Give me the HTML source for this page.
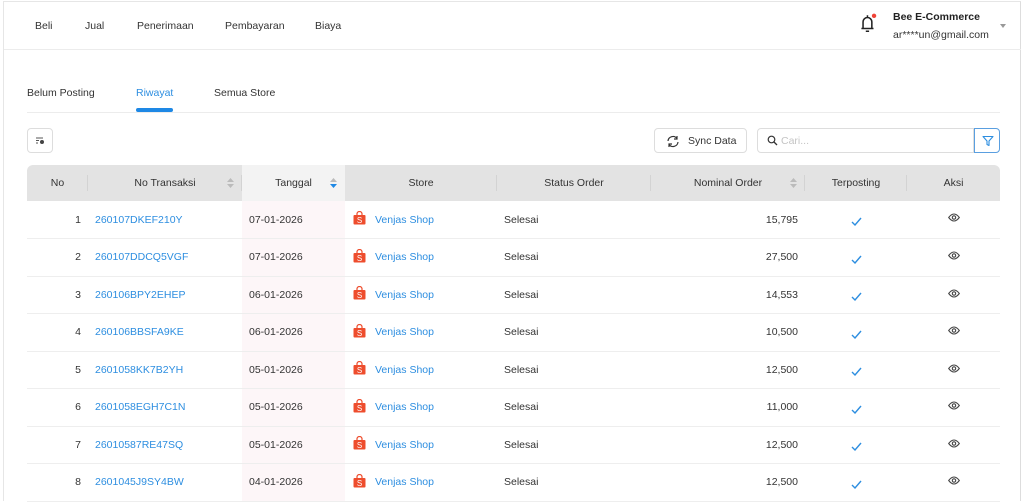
<!DOCTYPE html><html><head><meta charset="utf-8"><style>
*{box-sizing:border-box;margin:0;padding:0}
body{width:1024px;height:496px;overflow:hidden;background:#fff;font-family:"Liberation Sans",sans-serif;font-size:10.5px;color:#333;position:relative}
.frame{position:absolute;left:3px;top:1px;width:1018px;height:500px;border-left:1px solid #e6e6e6;border-right:1px solid #ddd;border-top:1px solid #e6e6e6}
.hdr{position:absolute;left:4px;top:2px;right:3px;height:48px;border-bottom:1px solid #ececec}
.nav{position:absolute;top:20px;font-size:10.5px;color:#333}
.abs{position:absolute}
table{position:absolute;left:27px;top:165px;width:973px;border-collapse:collapse;table-layout:fixed}
th{height:36px;background:#e3e3e3;font-weight:normal;color:#333;font-size:10.5px;position:relative}
th.sel{background:#f3f3f3}
th .sep{position:absolute;right:0;top:10px;height:16px;border-right:1px solid #d3d3d3}
td{height:37.5px;border-bottom:1px solid #eee;font-size:10.5px}
td.t{background:#fdf6f8;padding-left:7px}
.lnk{color:#2d8ee0}
.sort{position:absolute;right:8px;top:12px;width:7px}
</style></head><body>
<div class="frame"></div>
<div class="hdr"></div>
<div class="nav" style="left:35px">Beli</div>
<div class="nav" style="left:85px">Jual</div>
<div class="nav" style="left:137px">Penerimaan</div>
<div class="nav" style="left:225px">Pembayaran</div>
<div class="nav" style="left:315px">Biaya</div>
<svg class="abs" style="left:857px;top:12px" width="22" height="22" viewBox="0 0 20 20"><path d="M4 15h11M5.5 15V9a4 4 0 0 1 8 0v6M8 17.5h3M9.5 3v2" stroke="#222" stroke-width="1.4" fill="none"/><circle cx="15.5" cy="3.5" r="2" fill="#f04438"/></svg>
<div class="abs" style="left:893px;top:11px;font-weight:bold;font-size:10.5px;color:#222">Bee E-Commerce</div>
<div class="abs" style="left:893px;top:29px;font-size:10.5px;color:#333">ar****un@gmail.com</div>
<div class="abs" style="left:1000px;top:24px;width:0;height:0;border-left:3px solid transparent;border-right:3px solid transparent;border-top:4px solid #999"></div>

<div class="abs" style="left:27px;top:87px;color:#333">Belum Posting</div>
<div class="abs" style="left:136px;top:87px;color:#2d8ee0">Riwayat</div>
<div class="abs" style="left:136px;top:108px;width:37px;height:4px;border-radius:2px;background:#1e88e5"></div>
<div class="abs" style="left:214px;top:87px;color:#333">Semua Store</div>
<div class="abs" style="left:27px;top:112px;width:973px;border-top:1px solid #ececec"></div>

<div class="abs" style="left:27px;top:128px;width:26px;height:25px;border:1px solid #ddd;border-radius:4px"><svg width="24" height="23" viewBox="0 0 24 23"><path d="M8 9h7M8 11.5h3M8 14h2" stroke="#555" stroke-width="1"/><circle cx="14" cy="13" r="2" fill="#444"/></svg></div>
<div class="abs" style="left:654px;top:128px;width:93px;height:25px;border:1px solid #ddd;border-radius:4px"><svg class="abs" style="left:11px;top:6px" width="14" height="13" viewBox="0 0 14 13"><path d="M2 6a5 5 0 0 1 9-2.5M12 7a5 5 0 0 1-9 2.5M11 1v3h-3M3 12V9h3" stroke="#333" stroke-width="1.2" fill="none"/></svg><span class="abs" style="left:33px;top:6px;color:#333">Sync Data</span></div>
<div class="abs" style="left:757px;top:128px;width:217px;height:25px;border:1px solid #ddd;border-radius:4px 0 0 4px"><svg class="abs" style="left:9px;top:6px" width="11" height="11" viewBox="0 0 11 11"><circle cx="4.5" cy="4.5" r="3.3" stroke="#333" stroke-width="1.2" fill="none"/><path d="M7 7l3 3" stroke="#333" stroke-width="1.3"/></svg><span class="abs" style="left:23px;top:6px;color:#c4c4c4">Cari...</span></div>
<div class="abs" style="left:974px;top:128px;width:26px;height:25px;border:1px solid #5a9fe0;border-radius:0 4px 4px 0"><svg class="abs" style="left:7px;top:6px" width="12" height="12" viewBox="0 0 12 12"><path d="M1 1.5h10L7 6v4.5L5 9.5V6z" stroke="#2d8ee0" stroke-width="1.1" fill="none" stroke-linejoin="round"/></svg></div>

<table>
<colgroup><col style="width:61px"><col style="width:154px"><col style="width:103px"><col style="width:152px"><col style="width:154px"><col style="width:154px"><col style="width:102px"><col style="width:93px"></colgroup>
<tr><th style="border-radius:6px 0 0 0">No<span class="sep"></span></th><th>No Transaksi<svg class="sort" viewBox="0 0 7 12" height="12"><path d="M0 5l3.5-4 3.5 4zM0 7l3.5 4 3.5-4z" fill="#bbb"/></svg><span class="sep"></span></th><th class="sel">Tanggal<svg class="sort" viewBox="0 0 7 12" height="12"><path d="M0 5l3.5-4 3.5 4z" fill="#bbb"/><path d="M0 7l3.5 4 3.5-4z" fill="#1e88e5"/></svg></th><th>Store<span class="sep"></span></th><th>Status Order<span class="sep"></span></th><th>Nominal Order<svg class="sort" viewBox="0 0 7 12" height="12"><path d="M0 5l3.5-4 3.5 4zM0 7l3.5 4 3.5-4z" fill="#bbb"/></svg><span class="sep"></span></th><th>Terposting<span class="sep"></span></th><th style="border-radius:0 6px 0 0">Aksi</th></tr>
<tbody id="b"></tbody>
</table>
<script>
var d=[["260107DKEF210Y","07-01-2026","15,795"],["260107DDCQ5VGF","07-01-2026","27,500"],["260106BPY2EHEP","06-01-2026","14,553"],["260106BBSFA9KE","06-01-2026","10,500"],["2601058KK7B2YH","05-01-2026","12,500"],["2601058EGH7C1N","05-01-2026","11,000"],["26010587RE47SQ","05-01-2026","12,500"],["2601045J9SY4BW","04-01-2026","12,500"]];
var h="";d.forEach(function(r,i){h+='<tr><td style="text-align:right;padding-right:7px">'+(i+1)+'</td><td class="lnk" style="padding-left:7px">'+r[0]+'</td><td class="t">'+r[1]+'</td><td style="padding-left:8px"><svg width="13" height="14" viewBox="0 0 13 14" style="vertical-align:middle;margin-top:-3px"><path d="M4 4V3a2.5 2.5 0 0 1 5 0v1" stroke="#ee4d2d" stroke-width="1.2" fill="none"/><rect x="0.5" y="4" width="12" height="9.5" rx="1" fill="#ee4d2d"/><text x="6.5" y="12" font-size="8" fill="#fff" text-anchor="middle" font-family="Liberation Sans">S</text></svg><span class="lnk" style="margin-left:9px">Venjas Shop</span></td><td style="padding-left:7px">Selesai</td><td style="text-align:right;padding-right:7px">'+r[2]+'</td><td style="text-align:center"><svg width="11" height="9" viewBox="0 0 11 9" style="vertical-align:middle;margin-top:4px"><path d="M1 5l3 3 6-7" stroke="#2d8ee0" stroke-width="1.4" fill="none"/></svg></td><td style="text-align:center;vertical-align:top;padding-top:12px"><svg width="12" height="9" viewBox="0 0 12 9"><path d="M0.7 4.5Q6-2.5 11.3 4.5Q6 11.5 0.7 4.5z" stroke="#444" stroke-width="1.1" fill="none"/><circle cx="6" cy="4.5" r="1.7" stroke="#444" stroke-width="1.1" fill="none"/></svg></td></tr>'});
document.getElementById("b").innerHTML=h;
</script>
</body></html>
